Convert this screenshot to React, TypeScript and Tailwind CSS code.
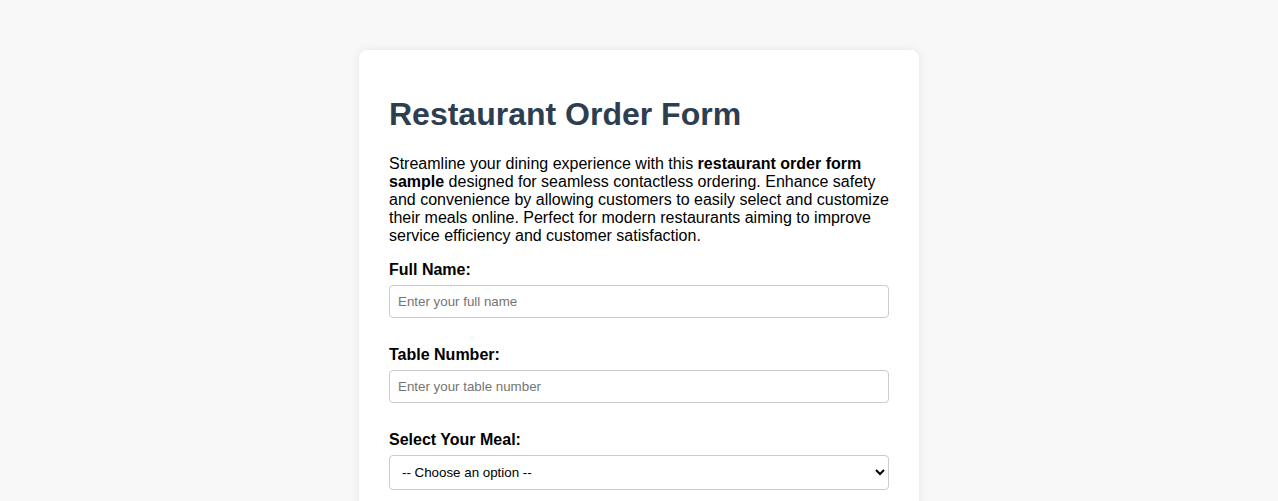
const fields = [
  { id: "name", label: "Full Name:", placeholder: "Enter your full name" },
  { id: "table", label: "Table Number:", placeholder: "Enter your table number" },
];

export default function App() {
  return (
    <div className="min-h-screen bg-[#f8f8f8] pt-[50px] pb-[50px] font-['Liberation_Sans',Arial,sans-serif] text-black">
      <div className="mx-auto w-[560px] rounded-lg bg-white px-[30px] pt-[30px] pb-[30px] shadow-[0_0_10px_rgba(0,0,0,0.08)]">
        <h1 className="mt-[16px] text-[32px] font-bold leading-[37px] text-[#2c3e50]">
          Restaurant Order Form
        </h1>
        <p className="mt-[22px] text-[16px] leading-[18px]">
          Streamline your dining experience with this{" "}
          <strong className="font-bold">restaurant order form sample</strong>{" "}
          designed for seamless contactless ordering. Enhance safety and
          convenience by allowing customers to easily select and customize their
          meals online. Perfect for modern restaurants aiming to improve service
          efficiency and customer satisfaction.
        </p>

        <form className="mt-[15.6px] flex flex-col gap-[27.6px]" onSubmit={(e) => e.preventDefault()}>
          {fields.map((f) => (
            <div key={f.id} className="flex flex-col gap-[6px]">
              <label htmlFor={f.id} className="text-[16px] font-bold leading-[18.4px]">
                {f.label}
              </label>
              <input
                id={f.id}
                type="text"
                placeholder={f.placeholder}
                className="h-[33px] w-full rounded-[4px] border border-[#ccc] px-[8px] text-[13.333px] placeholder:text-[#757575] focus:outline-none"
              />
            </div>
          ))}
          <div className="flex flex-col gap-[6px]">
            <label htmlFor="meal" className="text-[16px] font-bold leading-[18.4px]">
              Select Your Meal:
            </label>
            <select
              id="meal"
              defaultValue=""
              className="h-[35px] w-full rounded-[4px] border border-[#ccc] bg-white px-[8px] text-[13.333px] text-black"
            >
              <option value="">-- Choose an option --</option>
              <option>Grilled Chicken</option>
              <option>Vegetable Pasta</option>
              <option>Beef Burger</option>
            </select>
          </div>
          <div className="flex flex-col gap-[6px]">
            <label htmlFor="notes" className="text-[16px] font-bold leading-[18.4px]">
              Special Instructions:
            </label>
            <textarea
              id="notes"
              rows={4}
              placeholder="Any allergies or preferences?"
              className="w-full rounded-[4px] border border-[#ccc] px-[8px] py-[8px] text-[13.333px] placeholder:text-[#757575]"
            />
          </div>
          <button
            type="submit"
            className="rounded-[4px] bg-[#2c3e50] py-[10px] text-[16px] font-bold text-white"
          >
            Submit Order
          </button>
        </form>
      </div>
    </div>
  );
}
